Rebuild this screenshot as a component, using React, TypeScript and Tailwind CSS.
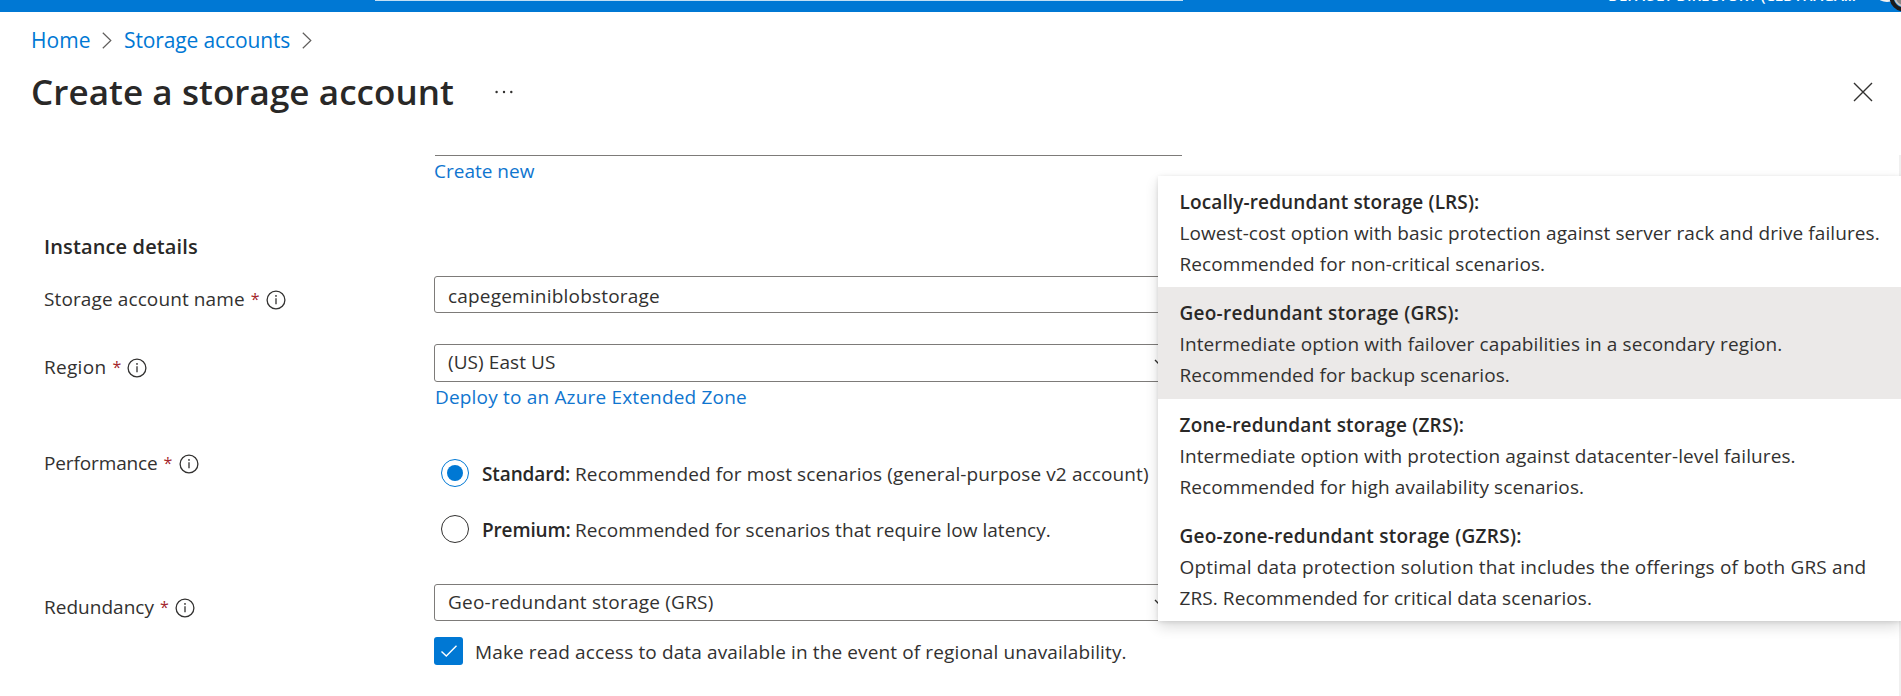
import type { ReactNode } from 'react';

function Chevron({ className }: { className: string }) {
  return (
    <svg className={className} width="10" height="17" viewBox="0 0 10 17" fill="none" stroke="#605e5c" strokeWidth="1.2">
      <path d="M0.8 0.8 L8.8 8.5 L0.8 16.2" />
    </svg>
  );
}

function InfoIcon() {
  return (
    <svg width="20" height="20" viewBox="0 0 20 20" fill="none" className="mt-[6px] ml-[7px] shrink-0">
      <circle cx="10" cy="10" r="8.9" stroke="#323130" strokeWidth="1.3" />
      <path d="M10 8.3 V14.2" stroke="#323130" strokeWidth="1.3" />
      <circle cx="10" cy="5.9" r="0.9" fill="#323130" />
    </svg>
  );
}

function Label({ children, className = '' }: { children: ReactNode; className?: string }) {
  return (
    <div className={`flex items-start pt-2 ${className}`}>
      <span>{children}</span>
      <span className="ml-[6px] w-[8px] text-[16px] tracking-normal text-[#a4262c]">*</span>
      <InfoIcon />
    </div>
  );
}

function DownChevron() {
  return (
    <svg width="16" height="10" viewBox="0 0 16 10" fill="none" stroke="#323130" strokeWidth="1.4" className="mt-3 mr-[11px]">
      <path d="M1 1 L8 8 L15 1" />
    </svg>
  );
}

function Row({ children, className = '' }: { children: ReactNode; className?: string }) {
  return <div className={`grid grid-cols-[390px_748px] ${className}`}>{children}</div>;
}

const options = [
  {
    title: 'Locally-redundant storage (LRS):',
    titleClass: 'tracking-[0.125px]',
    lines: [
      { text: 'Lowest-cost option with basic protection against server rack and drive failures.', cls: 'tracking-[0.097px]' },
      { text: 'Recommended for non-critical scenarios.', cls: 'tracking-[0.085px]' },
    ],
    rowClass: 'bg-white',
  },
  {
    title: 'Geo-redundant storage (GRS):',
    titleClass: 'tracking-[0.26px]',
    lines: [
      { text: 'Intermediate option with failover capabilities in a secondary region.', cls: 'tracking-[0.115px]' },
      { text: 'Recommended for backup scenarios.', cls: 'tracking-[0.06px]' },
    ],
    rowClass: 'bg-[#ebe9e8]',
  },
  {
    title: 'Zone-redundant storage (ZRS):',
    titleClass: 'tracking-[0.2px]',
    lines: [
      { text: 'Intermediate option with protection against datacenter-level failures.', cls: 'tracking-[0.1px]' },
      { text: 'Recommended for high availability scenarios.', cls: 'tracking-[0.1px]' },
    ],
    rowClass: 'bg-white',
  },
  {
    title: 'Geo-zone-redundant storage (GZRS):',
    titleClass: 'tracking-[0.26px]',
    lines: [
      { text: 'Optimal data protection solution that includes the offerings of both GRS and', cls: 'tracking-[0.168px]' },
      { text: 'ZRS. Recommended for critical data scenarios.', cls: 'tracking-[0.08px]' },
    ],
    rowClass: 'bg-white',
  },
];

function TopBar() {
  return (
    <header className="relative h-3 overflow-hidden bg-[#0078d4]">
      <div className="ml-[375px] h-px w-[808px] bg-[#c3e0f5]" />
      <span className="absolute -top-[17px] left-[1608px] text-[15px] font-semibold leading-[24px] tracking-[-0.1px] text-white">
        DEFAULT DIRECTORY (CLDTHAGA...
      </span>
      <svg className="absolute top-0 right-0" width="24" height="12" viewBox="0 0 24 12">
        <ellipse cx="10" cy="-3" rx="9" ry="5" fill="#f3f2f1" />
        <circle cx="27" cy="-3" r="12.5" fill="none" stroke="#1b1a19" strokeWidth="4" />
        <circle cx="27" cy="-3" r="9" fill="#8a8886" stroke="#c8c6c4" strokeWidth="2" />
      </svg>
    </header>
  );
}

export default function App() {
  return (
    <div className="relative h-[696px] w-[1901px] overflow-hidden whitespace-nowrap bg-white font-['Open_Sans','Noto_Sans',sans-serif] text-[19px] leading-[30px] text-[#323130]">
      <TopBar />

      <nav className="flex h-[30px] items-start pl-[31px] pt-[13px] text-[21px] text-[#0078d4]">
        <a className="w-[71px] tracking-[0.1px]">Home</a>
        <Chevron className="mt-[7px]" />
        <a className="ml-[12px] w-[178px] tracking-[-0.126px]">Storage accounts</a>
        <Chevron className="mt-[7px]" />
      </nav>

      <div className="flex h-[113px] items-start pl-[31px] pt-[26px]">
        <h1 className="w-[464px] text-[35px] font-semibold leading-[48px] tracking-[0.07px] text-[#292827]">
          Create a storage account
        </h1>
        <svg width="20" height="6" viewBox="0 0 20 6" fill="#323130" className="mt-[21px]">
          <circle cx="1.6" cy="3" r="1.2" />
          <circle cx="9" cy="3" r="1.2" />
          <circle cx="16.3" cy="3" r="1.2" />
        </svg>
        <svg width="20" height="20" viewBox="0 0 20 20" fill="none" stroke="#323130" strokeWidth="1.4" className="ml-auto mt-[14px] mr-[28px]">
          <path d="M1 1 L19 19 M19 1 L1 19" />
        </svg>
      </div>

      <main className="h-[541px] border-r-2 border-[#f0f0f0] pl-[44px]">
        <Row>
          <div />
          <div>
            <div className="ml-px h-px bg-[#7d7b79]" />
            <a className="block text-[#0f75cf]">Create new</a>
          </div>
        </Row>

        <h2 className="mt-[46px] text-[20px] font-semibold tracking-[0.13px] text-[#292827]">Instance details</h2>

        <Row className="mt-[14px]">
          <Label className="tracking-[0.112px]">Storage account name</Label>
          <div className="h-[37px] rounded-[3px] border border-[#7d7b79] pt-1 pl-[13px] tracking-[0.193px]">capegeminiblobstorage</div>
        </Row>

        <Row className="mt-[30px]">
          <Label className="tracking-[0.3px]">Region</Label>
          <div>
            <div className="flex h-[38px] justify-between rounded-[3px] border border-[#7d7b79] pt-[2px] pl-[13px] tracking-[0.078px]">
              (US) East US
              <DownChevron />
            </div>
            <a className="block pl-px text-[#0f75cf] tracking-[0.181px]">Deploy to an Azure Extended Zone</a>
          </div>
        </Row>

        <Row className="mt-[28px]">
          <Label className="tracking-[-0.13px]">Performance</Label>
          <div className="flex flex-col gap-[28px] pt-[19px] pl-[7px]">
            <div className="flex h-[28px] items-start">
              <span className="flex size-[28px] items-center justify-center rounded-full border border-[#0078d4]">
                <span className="size-4 rounded-full bg-[#0078d4]" />
              </span>
              <b className="ml-[13px] w-[93px] font-semibold tracking-[-0.117px] text-[#292827]">Standard:</b>
              <span className="tracking-[0.12px]">Recommended for most scenarios (general-purpose v2 account)</span>
            </div>
            <div className="flex h-[28px] items-start">
              <span className="size-[28px] rounded-full border border-[#323130]" />
              <b className="ml-[13px] w-[93px] font-semibold tracking-[-0.14px] text-[#292827]">Premium:</b>
              <span className="tracking-[0.05px]">Recommended for scenarios that require low latency.</span>
            </div>
          </div>
        </Row>

        <Row className="mt-[41px]">
          <Label className="tracking-[0.02px]">Redundancy</Label>
          <div>
            <div className="flex h-[37px] justify-between rounded-[3px] border border-[#7d7b79] pt-[2px] pl-[13px] tracking-[0.22px]">
              Geo-redundant storage (GRS)
              <DownChevron />
            </div>
            <div className="mt-4 flex items-start">
              <span className="flex h-[28px] w-[29px] items-center justify-center rounded-[3px] bg-[#0078d4]">
                <svg width="18" height="14" viewBox="0 0 18 14" fill="none" stroke="#fff" strokeWidth="1.4">
                  <path d="M1.5 7.5 L6.3 12 L16.5 1.8" />
                </svg>
              </span>
              <span className="ml-[12px] tracking-[0.125px]">
                Make read access to data available in the event of regional unavailability.
              </span>
            </div>
          </div>
        </Row>
      </main>

      <aside className="absolute left-[1158px] top-[176px] h-[445px] w-[743px] rounded-l-[3px] bg-white shadow-[0_6px_14px_rgba(0,0,0,0.14),0_1px_4px_rgba(0,0,0,0.11)]">
        {options.map((o) => (
          <div key={o.title} className={`h-[111.25px] pt-[11px] pl-[21.5px] leading-[31px] ${o.rowClass}`}>
            <div className={`font-semibold text-[#292827] ${o.titleClass}`}>{o.title}</div>
            {o.lines.map((l) => (
              <div key={l.text} className={l.cls}>{l.text}</div>
            ))}
          </div>
        ))}
      </aside>
    </div>
  );
}
